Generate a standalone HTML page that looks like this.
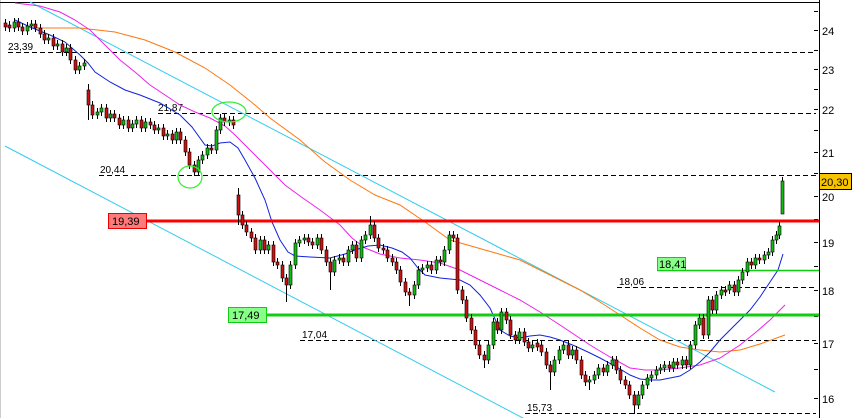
<!DOCTYPE html>
<html><head><meta charset="utf-8"><style>
html,body{margin:0;padding:0;background:#fff;}
svg{display:block;font-family:"Liberation Sans",sans-serif;}
</style></head><body>
<svg width="854" height="418" viewBox="0 0 854 418" xmlns="http://www.w3.org/2000/svg">
<rect width="854" height="418" fill="#fff"/>
<line x1="0.5" y1="0" x2="0.5" y2="418" stroke="#ccc"/>
<line x1="0" y1="2.5" x2="819" y2="2.5" stroke="#000"/>
<line x1="819.5" y1="0" x2="819.5" y2="418" stroke="#000"/>
<g stroke="#000" stroke-dasharray="5,3">
<line x1="8" y1="52.5" x2="816" y2="52.5"/>
<line x1="158" y1="113.5" x2="816" y2="113.5"/>
<line x1="99" y1="175.5" x2="816" y2="175.5"/>
<line x1="617" y1="287.5" x2="816" y2="287.5"/>
<line x1="300" y1="340.5" x2="816" y2="340.5"/>
<line x1="525" y1="413.5" x2="816" y2="413.5"/>
</g>
<g font-size="10" fill="#000">
<text x="8" y="50">23,39</text>
<text x="158" y="111">21,87</text>
<text x="100" y="173">20,44</text>
<text x="619" y="285">18,06</text>
<text x="302" y="338">17,04</text>
<text x="527" y="411">15,73</text>
</g>
<g stroke="#000">
<line x1="814" y1="11.5" x2="818" y2="11.5"/><line x1="814" y1="30.5" x2="818" y2="30.5"/>
<line x1="814" y1="50.5" x2="818" y2="50.5"/><line x1="814" y1="69.5" x2="818" y2="69.5"/>
<line x1="814" y1="89.5" x2="818" y2="89.5"/><line x1="814" y1="109.5" x2="818" y2="109.5"/>
<line x1="814" y1="130.5" x2="818" y2="130.5"/><line x1="814" y1="152.5" x2="818" y2="152.5"/>
<line x1="814" y1="173.5" x2="818" y2="173.5"/><line x1="814" y1="196.5" x2="818" y2="196.5"/>
<line x1="814" y1="219.5" x2="818" y2="219.5"/><line x1="814" y1="242.5" x2="818" y2="242.5"/>
<line x1="814" y1="266.5" x2="818" y2="266.5"/><line x1="814" y1="290.5" x2="818" y2="290.5"/>
<line x1="814" y1="316.5" x2="818" y2="316.5"/><line x1="814" y1="343.5" x2="818" y2="343.5"/>
<line x1="814" y1="369.5" x2="818" y2="369.5"/><line x1="814" y1="398.5" x2="818" y2="398.5"/>
</g>
<g font-size="11" fill="#000">
<text x="822" y="35">24</text><text x="822" y="74">23</text><text x="822" y="114">22</text>
<text x="822" y="157">21</text><text x="822" y="201">20</text><text x="822" y="247">19</text>
<text x="822" y="295">18</text><text x="822" y="348">17</text><text x="822" y="403">16</text>
</g>
<rect x="819.5" y="173.5" width="32" height="16" fill="#f8c400" stroke="#000"/>
<text x="821" y="186" font-size="11">20,30</text>
<line x1="30" y1="2" x2="775" y2="392" stroke="#33ccee"/>
<line x1="5" y1="146" x2="540" y2="427" stroke="#33ccee"/>
<polyline fill="none" stroke="#ff7711" points="35,28 80,28 115,32 145,40 175,52 205,68 230,85 255,105 270,118 300,140 325,162 350,180 375,195 400,205 425,222 450,240 485,250 520,260 550,275 580,290 600,302 620,315 640,328 660,340 680,347 700,350 720,352 740,350 760,344 785,335"/>
<polyline fill="none" stroke="#ee22ee" points="15,3 40,6 60,12 75,20 90,30 105,45 120,60 135,72 150,85 165,95 180,105 195,112 210,118 225,126 235,135 250,150 260,160 272,172 285,185 300,196 320,210 340,225 352,238 365,248 380,254 400,258 420,260 440,263 460,270 480,280 500,290 520,300 540,312 560,325 575,335 590,345 610,357 630,368 645,370 660,370 680,368 700,365 720,358 740,345 755,333 770,320 785,305"/>
<polyline fill="none" stroke="#1122dd" points="15,20 30,27 50,35 65,42 80,55 88,63 95,72 110,82 125,90 140,95 160,103 180,115 192,127 205,145 212,146 220,143 230,142 238,148 245,160 255,178 265,200 272,222 280,240 288,252 295,256 310,257 330,258 345,254 355,250 368,246 380,245 392,248 402,252 410,258 418,268 425,275 440,278 460,280 470,285 480,295 490,308 500,330 510,336 520,338 530,336 540,335 550,337 560,340 575,346 590,353 600,358 615,366 630,375 640,379 650,380 660,380 670,378 680,376 690,370 700,362 710,352 720,340 735,325 750,310 760,297 770,282 778,270 783,254"/>
<line x1="108" y1="221" x2="819" y2="221" stroke="#ff0000" stroke-width="3"/>
<rect x="108.5" y="213.5" width="38" height="15" fill="#ff7b7b" stroke="#ee0000"/>
<text x="112" y="225" font-size="11">19,39</text>
<line x1="228" y1="315" x2="819" y2="315" stroke="#11cc11" stroke-width="3"/>
<rect x="228.5" y="307.5" width="38" height="15" fill="#88ff88" stroke="#11cc11"/>
<text x="232" y="319" font-size="11">17,49</text>
<line x1="657" y1="270.5" x2="819" y2="270.5" stroke="#11cc11" stroke-width="1.5"/>
<rect x="657.5" y="257.5" width="28" height="13" fill="#88ff88" stroke="#11cc11"/>
<text x="659" y="268" font-size="11">18,41</text>

<path fill="none" stroke="#000" d="M5.5 19V31M9.5 21V32M14.5 18V32M18.5 18V31M22.5 23V35M27.5 22V35M31.5 20V30M35.5 20V32M40.5 24V38M44.5 30V44M48.5 34V44M53.5 34V50M57.5 40V50M62.5 40V56M66.5 44V56M70.5 44V64M75.5 56V74M79.5 62V74M84.5 59V70M88.5 84V120M92.5 101V119M97.5 108V119M101.5 104V116M106.5 104V122M110.5 110V122M114.5 110V122M119.5 114V129M123.5 116V129M128.5 116V132M132.5 120V132M136.5 116V128M141.5 116V132M145.5 118V132M150.5 118V129M154.5 121V134M158.5 124V134M163.5 124V140M167.5 130V140M172.5 130V144M176.5 128V144M180.5 128V144M185.5 136V156M189.5 148V169M194.5 161V176M198.5 156V176M202.5 151V164M207.5 144V159M211.5 144V154M216.5 126V154M220.5 114V134M224.5 114V126M229.5 116V126M233.5 116V129M238.5 188V225M242.5 211V229M246.5 221V236M251.5 228V242M255.5 234V254M260.5 236V254M264.5 236V254M268.5 241V254M273.5 241V266M277.5 258V269M282.5 261V282M286.5 274V302M290.5 261V289M295.5 239V269M299.5 236V247M304.5 234V244M308.5 234V246M312.5 238V249M317.5 234V249M321.5 234V254M326.5 246V266M330.5 258V290M334.5 256V276M339.5 254V264M343.5 254V266M348.5 246V266M352.5 241V254M356.5 241V262M361.5 236V262M365.5 231V244M370.5 216V239M374.5 221V242M378.5 234V252M383.5 244V254M387.5 246V262M392.5 254V266M396.5 258V274M400.5 266V286M405.5 278V296M409.5 288V306M414.5 281V299M418.5 266V289M422.5 264V274M427.5 261V272M431.5 261V274M436.5 256V274M440.5 256V266M444.5 246V266M449.5 231V254M453.5 231V242M457.5 234V294M462.5 286V304M466.5 296V322M471.5 314V334M475.5 326V349M479.5 341V359M484.5 351V368M488.5 341V364M493.5 318V349M497.5 318V334M501.5 308V334M506.5 308V324M510.5 316V339M515.5 331V344M519.5 328V344M524.5 328V346M528.5 338V352M532.5 341V352M537.5 339V351M541.5 341V356M546.5 348V369M550.5 361V390M554.5 356V376M559.5 346V364M563.5 341V354M568.5 341V359M572.5 346V359M576.5 346V364M581.5 356V379M585.5 371V386M589.5 376V390M594.5 371V384M598.5 364V379M603.5 364V376M607.5 361V376M612.5 356V369M616.5 356V374M620.5 366V384M625.5 376V389M629.5 381V399M634.5 391V414M638.5 391V409M642.5 381V399M647.5 374V389M651.5 371V382M656.5 366V379M660.5 364V374M664.5 361V372M669.5 361V372M673.5 358V372M677.5 358V369M682.5 356V369M686.5 356V369M690.5 341V369M695.5 321V349M699.5 314V329M703.5 314V339M708.5 296V339M712.5 296V314M716.5 291V314M721.5 286V299M725.5 286V296M729.5 281V294M734.5 281V296M738.5 276V296M742.5 268V284M747.5 258V276M751.5 258V269M755.5 254V269M759.5 254V264M764.5 251V264M768.5 248V259M772.5 236V256M776.5 231V244M779.5 222V239M782.5 177V214"/>
<g fill="#cc1111" stroke="#000" stroke-width="0.6">
<rect x="4" y="23" width="3" height="4"/><rect x="8" y="25" width="3" height="3"/><rect x="17" y="22" width="3" height="5"/><rect x="21" y="27" width="3" height="4"/><rect x="34" y="24" width="3" height="4"/><rect x="39" y="28" width="3" height="6"/><rect x="43" y="34" width="3" height="6"/><rect x="52" y="38" width="3" height="8"/><rect x="61" y="44" width="3" height="8"/><rect x="69" y="48" width="3" height="12"/><rect x="74" y="60" width="3" height="10"/><rect x="87" y="90" width="3" height="15"/><rect x="91" y="105" width="3" height="10"/><rect x="105" y="108" width="3" height="10"/><rect x="113" y="114" width="3" height="4"/><rect x="118" y="118" width="3" height="7"/><rect x="127" y="120" width="3" height="8"/><rect x="140" y="120" width="3" height="8"/><rect x="149" y="122" width="3" height="3"/><rect x="153" y="125" width="3" height="5"/><rect x="162" y="128" width="3" height="8"/><rect x="171" y="134" width="3" height="6"/><rect x="179" y="132" width="3" height="8"/><rect x="184" y="140" width="3" height="12"/><rect x="188" y="152" width="3" height="13"/><rect x="193" y="165" width="3" height="7"/><rect x="210" y="148" width="3" height="2"/><rect x="223" y="118" width="3" height="4"/><rect x="232" y="120" width="3" height="5"/><rect x="237" y="195" width="3" height="20"/><rect x="241" y="215" width="3" height="10"/><rect x="245" y="225" width="3" height="7"/><rect x="250" y="232" width="3" height="6"/><rect x="254" y="238" width="3" height="12"/><rect x="263" y="240" width="3" height="10"/><rect x="272" y="245" width="3" height="17"/><rect x="276" y="262" width="3" height="3"/><rect x="281" y="265" width="3" height="13"/><rect x="285" y="278" width="3" height="7"/><rect x="307" y="238" width="3" height="4"/><rect x="311" y="242" width="3" height="3"/><rect x="320" y="238" width="3" height="12"/><rect x="325" y="250" width="3" height="12"/><rect x="329" y="262" width="3" height="10"/><rect x="342" y="258" width="3" height="4"/><rect x="355" y="245" width="3" height="13"/><rect x="373" y="225" width="3" height="13"/><rect x="377" y="238" width="3" height="10"/><rect x="382" y="248" width="3" height="2"/><rect x="386" y="250" width="3" height="8"/><rect x="391" y="258" width="3" height="4"/><rect x="395" y="262" width="3" height="8"/><rect x="399" y="270" width="3" height="12"/><rect x="404" y="282" width="3" height="10"/><rect x="408" y="292" width="3" height="3"/><rect x="430" y="265" width="3" height="5"/><rect x="439" y="260" width="3" height="2"/><rect x="452" y="235" width="3" height="3"/><rect x="456" y="238" width="3" height="52"/><rect x="461" y="290" width="3" height="10"/><rect x="465" y="300" width="3" height="18"/><rect x="470" y="318" width="3" height="12"/><rect x="474" y="330" width="3" height="15"/><rect x="478" y="345" width="3" height="10"/><rect x="483" y="355" width="3" height="5"/><rect x="496" y="322" width="3" height="8"/><rect x="505" y="312" width="3" height="8"/><rect x="509" y="320" width="3" height="15"/><rect x="514" y="335" width="3" height="5"/><rect x="523" y="332" width="3" height="10"/><rect x="527" y="342" width="3" height="6"/><rect x="536" y="343" width="3" height="4"/><rect x="540" y="345" width="3" height="7"/><rect x="545" y="352" width="3" height="13"/><rect x="549" y="365" width="3" height="7"/><rect x="567" y="345" width="3" height="10"/><rect x="575" y="350" width="3" height="10"/><rect x="580" y="360" width="3" height="15"/><rect x="584" y="375" width="3" height="7"/><rect x="602" y="368" width="3" height="4"/><rect x="615" y="360" width="3" height="10"/><rect x="619" y="370" width="3" height="10"/><rect x="624" y="380" width="3" height="5"/><rect x="628" y="385" width="3" height="10"/><rect x="633" y="395" width="3" height="10"/><rect x="668" y="365" width="3" height="3"/><rect x="676" y="362" width="3" height="3"/><rect x="685" y="360" width="3" height="5"/><rect x="702" y="318" width="3" height="17"/><rect x="711" y="300" width="3" height="10"/><rect x="724" y="290" width="3" height="2"/><rect x="733" y="285" width="3" height="7"/><rect x="750" y="262" width="3" height="3"/><rect x="758" y="258" width="3" height="2"/>
</g>
<g fill="#11bb11" stroke="#000" stroke-width="0.6">
<rect x="13" y="22" width="3" height="6"/><rect x="26" y="26" width="3" height="5"/><rect x="30" y="24" width="3" height="2"/><rect x="47" y="38" width="3" height="2"/><rect x="56" y="44" width="3" height="2"/><rect x="65" y="48" width="3" height="4"/><rect x="78" y="66" width="3" height="4"/><rect x="83" y="63" width="3" height="3"/><rect x="96" y="112" width="3" height="3"/><rect x="100" y="108" width="3" height="4"/><rect x="109" y="114" width="3" height="4"/><rect x="122" y="120" width="3" height="5"/><rect x="131" y="124" width="3" height="4"/><rect x="135" y="120" width="3" height="4"/><rect x="144" y="122" width="3" height="6"/><rect x="157" y="128" width="3" height="2"/><rect x="166" y="134" width="3" height="2"/><rect x="175" y="132" width="3" height="8"/><rect x="197" y="160" width="3" height="12"/><rect x="201" y="155" width="3" height="5"/><rect x="206" y="148" width="3" height="7"/><rect x="215" y="130" width="3" height="20"/><rect x="219" y="118" width="3" height="12"/><rect x="228" y="120" width="3" height="2"/><rect x="259" y="240" width="3" height="10"/><rect x="267" y="245" width="3" height="5"/><rect x="289" y="265" width="3" height="20"/><rect x="294" y="243" width="3" height="22"/><rect x="298" y="240" width="3" height="3"/><rect x="303" y="238" width="3" height="2"/><rect x="316" y="238" width="3" height="7"/><rect x="333" y="260" width="3" height="12"/><rect x="338" y="258" width="3" height="2"/><rect x="347" y="250" width="3" height="12"/><rect x="351" y="245" width="3" height="5"/><rect x="360" y="240" width="3" height="18"/><rect x="364" y="235" width="3" height="5"/><rect x="369" y="225" width="3" height="10"/><rect x="413" y="285" width="3" height="10"/><rect x="417" y="270" width="3" height="15"/><rect x="421" y="268" width="3" height="2"/><rect x="426" y="265" width="3" height="3"/><rect x="435" y="260" width="3" height="10"/><rect x="443" y="250" width="3" height="12"/><rect x="448" y="235" width="3" height="15"/><rect x="487" y="345" width="3" height="15"/><rect x="492" y="322" width="3" height="23"/><rect x="500" y="312" width="3" height="18"/><rect x="518" y="332" width="3" height="8"/><rect x="531" y="345" width="3" height="3"/><rect x="553" y="360" width="3" height="12"/><rect x="558" y="350" width="3" height="10"/><rect x="562" y="345" width="3" height="5"/><rect x="571" y="350" width="3" height="5"/><rect x="588" y="380" width="3" height="2"/><rect x="593" y="375" width="3" height="5"/><rect x="597" y="368" width="3" height="7"/><rect x="606" y="365" width="3" height="7"/><rect x="611" y="360" width="3" height="5"/><rect x="637" y="395" width="3" height="10"/><rect x="641" y="385" width="3" height="10"/><rect x="646" y="378" width="3" height="7"/><rect x="650" y="375" width="3" height="3"/><rect x="655" y="370" width="3" height="5"/><rect x="659" y="368" width="3" height="2"/><rect x="663" y="365" width="3" height="3"/><rect x="672" y="362" width="3" height="6"/><rect x="681" y="360" width="3" height="5"/><rect x="689" y="345" width="3" height="20"/><rect x="694" y="325" width="3" height="20"/><rect x="698" y="318" width="3" height="7"/><rect x="707" y="300" width="3" height="35"/><rect x="715" y="295" width="3" height="15"/><rect x="720" y="290" width="3" height="5"/><rect x="728" y="285" width="3" height="5"/><rect x="737" y="280" width="3" height="12"/><rect x="741" y="272" width="3" height="8"/><rect x="746" y="262" width="3" height="10"/><rect x="754" y="258" width="3" height="7"/><rect x="763" y="255" width="3" height="5"/><rect x="767" y="252" width="3" height="3"/><rect x="771" y="240" width="3" height="12"/><rect x="775" y="235" width="3" height="5"/><rect x="778" y="226" width="3" height="9"/><rect x="781" y="181" width="3" height="33"/>
</g>
<ellipse cx="229" cy="112" rx="17" ry="10" fill="none" stroke="#33ee33" stroke-width="1.2"/>
<ellipse cx="190" cy="177" rx="12" ry="11" fill="none" stroke="#33ee33" stroke-width="1.2"/>
</svg>
</body></html>
